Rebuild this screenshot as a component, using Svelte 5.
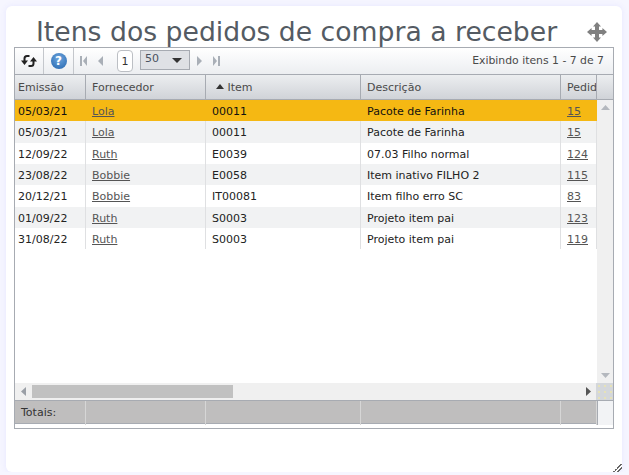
<script>
    // rows of the grid, in the order they are displayed
    const rows = [
        { date: "05/03/21", supplier: "Lola", item: "00011", desc: "Pacote de Farinha", order: "15", selected: true },
        { date: "05/03/21", supplier: "Lola", item: "00011", desc: "Pacote de Farinha", order: "15" },
        { date: "12/09/22", supplier: "Ruth", item: "E0039", desc: "07.03 Filho normal", order: "124" },
        { date: "23/08/22", supplier: "Bobbie", item: "E0058", desc: "Item inativo FILHO 2", order: "115" },
        { date: "20/12/21", supplier: "Bobbie", item: "IT00081", desc: "Item filho erro SC", order: "83" },
        { date: "01/09/22", supplier: "Ruth", item: "S0003", desc: "Projeto item pai", order: "123" },
        { date: "31/08/22", supplier: "Ruth", item: "S0003", desc: "Projeto item pai", order: "119" }
    ];
</script>

<div class="card">
    <div class="titleBar">
        <h1>Itens dos pedidos de compra a receber</h1>
        <svg class="moveIcon" width="20" height="20" viewBox="0 0 20 20">
            <path fill="#808080" d="M10 0 14 4.6H12V8H15.4V6L20 10 15.4 14V12H12V15.4H14L10 20 6 15.4H8V12H4.6V14L0 10 4.6 6V8H8V4.6H6Z"/>
        </svg>
    </div>

    <div class="grid">
        <div class="toolbar">
            <div class="toolCell refresh">
                <svg width="16" height="14" viewBox="0 0 16 14">
                    <path fill="none" stroke="#222" stroke-width="2" d="M3.5 9V4.5Q3.5 2 6 2H8.5M12.5 5V9.5Q12.5 12 10 12H7.5"/>
                    <path fill="#222" d="M0 6.5H7L3.5 11ZM9 7.5H16L12.5 3Z"/>
                </svg>
            </div>
            <div class="toolCell help">
                <div class="helpIcon">?</div>
            </div>
            <div class="pager">
                <svg class="first" width="7" height="10" viewBox="0 0 7 10"><path fill="#a9afb7" d="M0 0H2V10H0ZM7 0V10L3 5Z"/></svg>
                <svg class="prev" width="5" height="10" viewBox="0 0 5 10"><path fill="#a9afb7" d="M5 0V10L0 5Z"/></svg>
                <div class="pageNum">1</div>
                <div class="pageSize">
                    <span>50</span>
                    <svg width="10" height="5" viewBox="0 0 10 5"><path fill="#333" d="M0 0H10L5 5Z"/></svg>
                </div>
                <svg class="next" width="5" height="10" viewBox="0 0 5 10"><path fill="#a9afb7" d="M0 0V10L5 5Z"/></svg>
                <svg class="last" width="7" height="10" viewBox="0 0 7 10"><path fill="#a9afb7" d="M0 0V10L4 5ZM5 0H7V10H5Z"/></svg>
            </div>
            <div class="showing">Exibindo itens 1 - 7 de 7</div>
        </div>

        <div class="head cols">
            <div class="th first">Emissão</div>
            <div class="th">Fornecedor</div>
            <div class="th sorted">
                <svg width="8" height="5" viewBox="0 0 8 5"><path fill="#333" d="M0 5H8L4 0Z"/></svg>
                Item
            </div>
            <div class="th">Descrição</div>
            <div class="th clip">Pedid</div>
            <div class="th end"></div>
        </div>

        <div class="body">
            <div class="rows">
                {#each rows as row, i}
                    <div class="row cols" class:alt={i % 2 == 1} class:selected={row.selected}>
                        <div class="td first">{row.date}</div>
                        <div class="td"><a href="#s">{row.supplier}</a></div>
                        <div class="td">{row.item}</div>
                        <div class="td">{row.desc}</div>
                        <div class="td"><a href="#p">{row.order}</a></div>
                    </div>
                {/each}
            </div>
            <div class="vScroll">
                <svg width="9" height="5" viewBox="0 0 9 5"><path fill="#b4b8be" d="M0 5H9L4.5 0Z"/></svg>
                <svg width="9" height="5" viewBox="0 0 9 5"><path fill="#b4b8be" d="M0 0H9L4.5 5Z"/></svg>
            </div>
        </div>

        <div class="hScrollRow">
            <div class="hScroll">
                <svg width="5" height="9" viewBox="0 0 5 9"><path fill="#9a9fa6" d="M5 0V9L0 4.5Z"/></svg>
                <div class="thumb"></div>
                <svg class="right" width="5" height="9" viewBox="0 0 5 9"><path fill="#555" d="M0 0V9L5 4.5Z"/></svg>
            </div>
            <div class="corner"></div>
        </div>

        <div class="foot cols">
            <div class="tf first">Totais:</div>
            <div class="tf"></div>
            <div class="tf"></div>
            <div class="tf"></div>
            <div class="tf"></div>
            <div class="tf end"></div>
        </div>
    </div>

    <div class="resize"></div>
</div>

<style>
    :global(body) {
        margin: 0;
        background: #f6f6ff;
    }

    .card {
        position: relative;
        box-sizing: border-box;
        width: 616px;
        height: 466px;
        margin: 6px 0 0 6px;
        padding: 0 8px;
        background: #fff;
        border-radius: 6px;
        box-shadow: 0 0 6px #e6e6ff;
        font-family: "DejaVu Sans", sans-serif;
        font-size: 11px;
        color: #333;
    }

    /* title with the move handle on the right */
    .titleBar {
        position: relative;
        height: 41px;
    }
    h1 {
        margin: 0;
        padding: 9px 0 0 22px;
        font-size: 26.67px;
        line-height: 33px;
        font-weight: normal;
        color: #545b63;
        white-space: nowrap;
    }
    .moveIcon {
        position: absolute;
        left: 573px;
        top: 16px;
    }

    .grid {
        box-sizing: border-box;
        width: 600px;
        height: 382px;
        border: 1px solid #a7abb2;
        display: flex;
        flex-direction: column;
    }

    .toolbar {
        height: 26px;
        flex: none;
        display: flex;
        align-items: stretch;
        background: linear-gradient(#ffffff, #eceef1);
        border-bottom: 1px solid #a7abb2;
    }
    .toolCell {
        display: flex;
        align-items: center;
        justify-content: center;
        border-right: 1px solid #c4c7cc;
    }
    .refresh {
        width: 28px;
    }
    .help {
        width: 29px;
    }
    .helpIcon {
        width: 16px;
        height: 16px;
        border-radius: 50%;
        background: radial-gradient(circle at 50% 35%, #6ea6de, #2364ad);
        color: #fff;
        font-weight: bold;
        font-size: 12px;
        line-height: 16px;
        text-align: center;
    }
    .pager {
        display: flex;
        align-items: center;
        padding-left: 6px;
    }
    .prev {
        margin-left: 11px;
    }
    .pageNum {
        box-sizing: border-box;
        width: 16px;
        height: 22px;
        margin-left: 14px;
        border: 1px solid #bcbfc4;
        border-radius: 4px;
        background: #fff;
        line-height: 22px;
        text-align: center;
    }
    .pageSize {
        box-sizing: border-box;
        width: 50px;
        height: 20px;
        margin: -2px 0 0 7px;
        padding: 0 7px 0 4px;
        display: flex;
        align-items: center;
        justify-content: space-between;
        border: 1px solid #a7abb2;
        background: #dfe1e5;
        line-height: 15px;
        color: #4a5260;
    }
    .pageSize span {
        margin-top: -3px;
    }
    .next {
        margin-left: 7px;
    }
    .last {
        margin-left: 11px;
    }
    .showing {
        margin-left: auto;
        padding-right: 9px;
        font-size: 10.85px;
        line-height: 25px;
        color: #4a4a4a;
    }

    /* columns are shared by header, rows and footer */
    .cols {
        display: grid;
        grid-template-columns: 71px 120px 155px 200px 36px 16px;
    }

    .head {
        height: 24px;
        flex: none;
        background: linear-gradient(#eceef0, #d0d3d8);
        border-bottom: 1px solid #a7abb2;
        color: #4a4a4a;
    }
    .th {
        box-sizing: border-box;
        padding-left: 6px;
        line-height: 25px;
        border-right: 1px solid #a7abb2;
        white-space: nowrap;
        overflow: hidden;
    }
    .th.first {
        padding-left: 3px;
    }
    .th.sorted svg {
        margin: 0 0 2px 4px;
    }
    .th.end {
        border-right: 0;
    }

    .body {
        flex: 1;
        min-height: 0;
        display: flex;
    }
    .rows {
        width: 582px;
        flex: none;
    }
    .row {
        height: 21.33px;
        grid-template-columns: 71px 120px 155px 200px 36px;
        line-height: 24px;
        color: #222;
    }
    .row.alt {
        background: #f1f2f3;
    }
    .row.selected {
        background: #f5b813;
        color: #111;
    }
    .td {
        box-sizing: border-box;
        padding-left: 6px;
        border-right: 1px solid #dfe0e2;
        white-space: nowrap;
        overflow: hidden;
    }
    .td.first {
        padding-left: 3px;
    }
    .selected .td {
        border-right-color: transparent;
    }
    .td a {
        color: #555;
    }
    .vScroll {
        flex: 1;
        display: flex;
        flex-direction: column;
        align-items: center;
        justify-content: space-between;
        padding: 5px 0 5px;
        background: #f0f0f0;
    }

    .hScrollRow {
        height: 17px;
        flex: none;
        display: flex;
    }
    .hScroll {
        flex: 1;
        display: flex;
        align-items: center;
        padding: 0 5px 0 6px;
        background: #f0f0f0;
    }
    .thumb {
        width: 201px;
        height: 13px;
        margin-left: 6px;
        background: #c1c1c1;
    }
    .right {
        margin-left: auto;
    }
    .corner {
        width: 17px;
        background-color: #d4d7db;
        background-image: radial-gradient(circle, #e6e2b8 1px, transparent 1px);
        background-size: 6px 6px;
    }

    .foot {
        height: 22px;
        flex: none;
        margin-bottom: 4px;
        background: #bfbebe;
        border-top: 1px solid #a7abb2;
        border-bottom: 1px solid #a7abb2;
    }
    .tf {
        box-sizing: border-box;
        padding-left: 6px;
        line-height: 24px;
        border-right: 1px solid #d6d6d6;
    }
    .tf.end {
        background: #f2f3f5;
        border-left: 1px solid #a7abb2;
        border-right: 0;
    }

    /* resize grip in the corner of the card */
    .resize {
        position: absolute;
        right: 0;
        bottom: 0;
        width: 9px;
        height: 9px;
        background: linear-gradient(135deg, transparent 50%, #666 50%, #666 58%, transparent 58%, transparent 72%, #666 72%, #666 80%, transparent 80%);
    }
</style>
